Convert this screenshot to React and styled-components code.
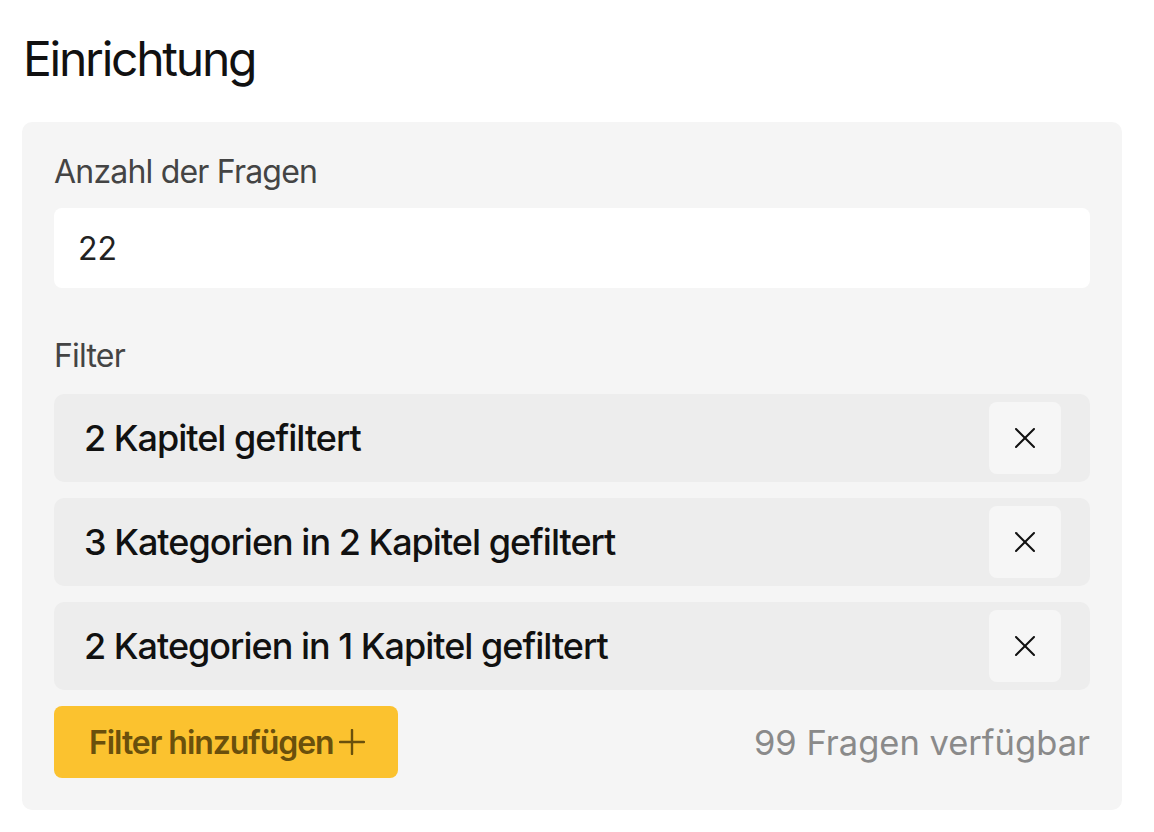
import React from "react";
import styled, { createGlobalStyle } from "styled-components";

const Global = createGlobalStyle`
  html, body { margin: 0; padding: 0; background: #ffffff; }
  body { font-family: Inter, "Noto Sans", sans-serif; -webkit-font-smoothing: antialiased; }
  * { box-sizing: border-box; }
`;

const Page = styled.div`
  width: 1154px;
  padding: 30px 32px 0 22px;
  display: flex;
  flex-direction: column;
`;

const Title = styled.h1`
  margin: 0 0 34px 0;
  padding-left: 1px;
  font-size: 48px;
  line-height: 58px;
  font-weight: 400;
  color: #111111;
  letter-spacing: -2.25px;
`;

const Panel = styled.section`
  background: #f5f5f5;
  border-radius: 10px;
  padding: 26px 32px 32px 32px;
  display: flex;
  flex-direction: column;
`;

const Label = styled.div`
  font-size: 32px;
  line-height: 48px;
  color: #444444;
  letter-spacing: -0.8px;
  margin-bottom: ${(p) => p.$mb || 12}px;
  margin-top: ${(p) => p.$mt || 0}px;
`;

const Input = styled.div`
  height: 80px;
  background: #ffffff;
  border-radius: 8px;
  display: flex;
  align-items: center;
  padding: 0 24px;
  font-size: 32px;
  color: #222222;
`;

const FilterList = styled.div`
  display: flex;
  flex-direction: column;
  gap: 16px;
`;

const FilterRow = styled.div`
  height: 88px;
  background: #ededed;
  border-radius: 10px;
  display: flex;
  align-items: center;
  justify-content: space-between;
  padding: 0 29px 0 30px;
`;

const FilterText = styled.span`
  font-size: 36px;
  font-weight: 500;
  color: #111111;
  letter-spacing: -1px;
`;

const RemoveButton = styled.button`
  width: 72px;
  height: 72px;
  border: none;
  border-radius: 8px;
  background: #f6f6f6;
  display: flex;
  align-items: center;
  justify-content: center;
  padding: 0;
  color: #111111;
`;

const Footer = styled.div`
  margin-top: 16px;
  display: flex;
  align-items: center;
  justify-content: space-between;
`;

const AddButton = styled.button`
  height: 72px;
  border: none;
  border-radius: 8px;
  background: #fbc22f;
  color: #6a500c;
  font-family: Inter, "Noto Sans", sans-serif;
  font-size: 32px;
  font-weight: 600;
  display: flex;
  align-items: center;
  gap: 5px;
  padding: 0 33px 0 35px;
  letter-spacing: -1.05px;
`;

const Available = styled.span`
  font-size: 34.5px;
  color: #8a8a8a;
`;

const XIcon = () => (
  <svg width="20" height="20" viewBox="0 0 20 20" fill="none" stroke="currentColor" strokeWidth="2" strokeLinecap="round">
    <line x1="1" y1="1" x2="19" y2="19" />
    <line x1="19" y1="1" x2="1" y2="19" />
  </svg>
);

const PlusIcon = () => (
  <svg width="26" height="26" viewBox="0 0 26 26" fill="none" stroke="currentColor" strokeWidth="2.4" strokeLinecap="round">
    <line x1="13" y1="1" x2="13" y2="25" />
    <line x1="1" y1="13" x2="25" y2="13" />
  </svg>
);

const filters = [
  "2 Kapitel gefiltert",
  "3 Kategorien in 2 Kapitel gefiltert",
  "2 Kategorien in 1 Kapitel gefiltert",
];

export default function App() {
  return (
    <>
      <Global />
      <Page>
        <Title>Einrichtung</Title>
        <Panel>
          <Label>Anzahl der Fragen</Label>
          <Input>22</Input>
          <Label $mt={44} $mb={14}>Filter</Label>
          <FilterList>
            {filters.map((f) => (
              <FilterRow key={f}>
                <FilterText>{f}</FilterText>
                <RemoveButton aria-label="Filter entfernen">
                  <XIcon />
                </RemoveButton>
              </FilterRow>
            ))}
          </FilterList>
          <Footer>
            <AddButton>
              Filter hinzufügen
              <PlusIcon />
            </AddButton>
            <Available>99 Fragen verfügbar</Available>
          </Footer>
        </Panel>
      </Page>
    </>
  );
}
